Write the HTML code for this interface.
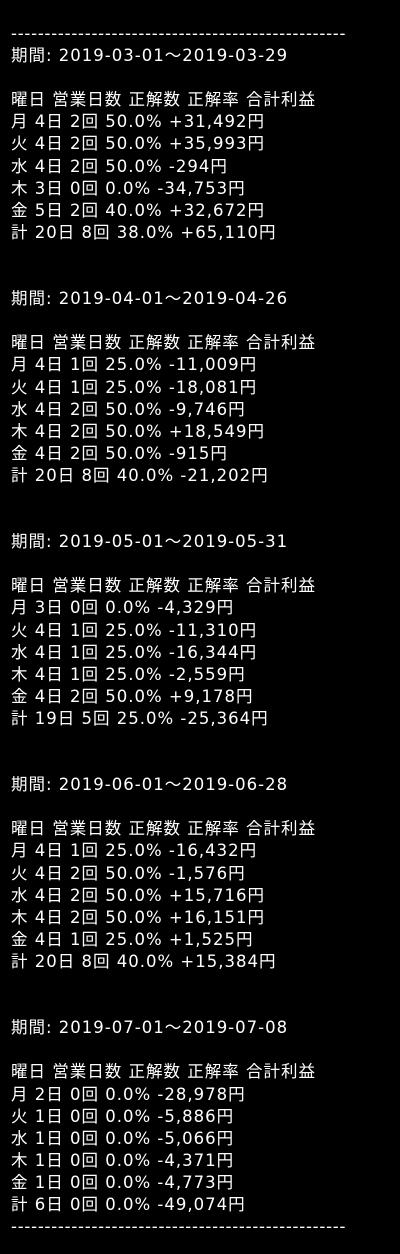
<!DOCTYPE html>
<html><head><meta charset="utf-8"><style>
html,body{margin:0;padding:0;background:#000;}
body{width:400px;height:1254px;overflow:hidden;color:#fff;font-family:"DejaVu Sans","Noto Sans CJK JP",sans-serif;font-size:16.5px;line-height:22.1px;}
.w{position:absolute;left:11px;top:23px;white-space:pre;letter-spacing:1px;}
.d{letter-spacing:0.75px;}
</style></head><body><div class="w"><span class="d">--------------------------------------------------</span>
期間: 2019-03-01～2019-03-29

曜日 営業日数 正解数 正解率 合計利益
月 4日 2回 50.0% +31,492円
火 4日 2回 50.0% +35,993円
水 4日 2回 50.0% -294円
木 3日 0回 0.0% -34,753円
金 5日 2回 40.0% +32,672円
計 20日 8回 38.0% +65,110円


期間: 2019-04-01～2019-04-26

曜日 営業日数 正解数 正解率 合計利益
月 4日 1回 25.0% -11,009円
火 4日 1回 25.0% -18,081円
水 4日 2回 50.0% -9,746円
木 4日 2回 50.0% +18,549円
金 4日 2回 50.0% -915円
計 20日 8回 40.0% -21,202円


期間: 2019-05-01～2019-05-31

曜日 営業日数 正解数 正解率 合計利益
月 3日 0回 0.0% -4,329円
火 4日 1回 25.0% -11,310円
水 4日 1回 25.0% -16,344円
木 4日 1回 25.0% -2,559円
金 4日 2回 50.0% +9,178円
計 19日 5回 25.0% -25,364円


期間: 2019-06-01～2019-06-28

曜日 営業日数 正解数 正解率 合計利益
月 4日 1回 25.0% -16,432円
火 4日 2回 50.0% -1,576円
水 4日 2回 50.0% +15,716円
木 4日 2回 50.0% +16,151円
金 4日 1回 25.0% +1,525円
計 20日 8回 40.0% +15,384円


期間: 2019-07-01～2019-07-08

曜日 営業日数 正解数 正解率 合計利益
月 2日 0回 0.0% -28,978円
火 1日 0回 0.0% -5,886円
水 1日 0回 0.0% -5,066円
木 1日 0回 0.0% -4,371円
金 1日 0回 0.0% -4,773円
計 6日 0回 0.0% -49,074円
<span class="d">--------------------------------------------------</span></div></body></html>
